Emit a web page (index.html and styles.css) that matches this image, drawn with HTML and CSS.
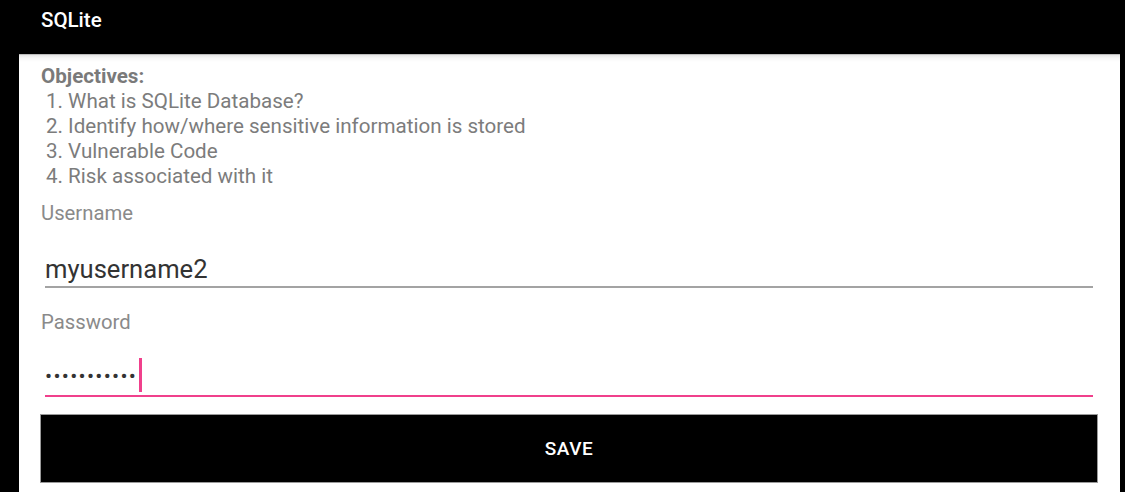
FILE: index.html
```html
<!DOCTYPE html>
<html>
<head>
<meta charset="utf-8">
<link rel="stylesheet" href="styles.css">
</head>
<body>
<div class="app">
  <header class="toolbar"><span class="title">SQLite</span></header>
  <main class="panel">
    <div class="objectives">
      <div class="obj-title">Objectives:</div>
      <div class="obj-item">1. What is SQLite Database?</div>
      <div class="obj-item">2. Identify how/where sensitive information is stored</div>
      <div class="obj-item">3. Vulnerable Code</div>
      <div class="obj-item">4. Risk associated with it</div>
    </div>
    <div class="label label-user">Username</div>
    <div class="field field-user">myusername2</div>
    <div class="label label-pass">Password</div>
    <div class="field field-pass"><span class="dots">•••••••••••</span><span class="cursor"></span></div>
    <button class="save">SAVE</button>
  </main>
</div>
</body>
</html>
```

FILE: styles.css
```css
* { box-sizing: border-box; }
html, body { margin: 0; padding: 0; }
body {
  background: #000;
  font-family: Roboto, "Noto Sans", sans-serif;
  width: 1125px;
  height: 492px;
  overflow: hidden;
}
.app {
  display: flex;
  flex-direction: column;
  height: 492px;
}
.toolbar {
  height: 54px;
  padding: 9px 0 0 41px;
}
.title {
  color: #fff;
  font-size: 20.5px;
  line-height: 22px;
  font-weight: 500;
}
.panel {
  flex: 1;
  margin: 0 5px 0 19px;
  background: linear-gradient(#e6e6e6 0, #f7f7f7 3px, #fff 7px);
  border-top: 1px solid #bdbdbd;
  padding: 9px 22px 0 21px;
  display: flex;
  flex-direction: column;
}
.objectives {
  padding-left: 1px;
  font-size: 20.6px;
  line-height: 25px;
  color: #7c7c7c;
}
.obj-title { font-weight: 700; color: #7a7a7a; }
.obj-item { padding-left: 5px; }
.label {
  padding-left: 1px;
  font-size: 20.3px;
  line-height: 25px;
  color: #8a8a8a;
}
.label-user { margin-top: 12px; }
.label-pass { margin-top: 22px; }
.field {
  margin: 0 5px;
  color: #333;
}
.field-user {
  font-size: 25.6px;
  padding-top: 30px;
  padding-bottom: 4px;
  line-height: 26px;
  border-bottom: 2px solid #a3a3a3;
}
.field-pass {
  display: flex;
  align-items: center;
  gap: 2px;
  height: 62px;
  padding-top: 23px;
  padding-bottom: 3px;
  border-bottom: 2px solid #f0408c;
}
.dots {
  font-size: 21px;
  letter-spacing: 1.3px;
  color: #333;
  position: relative;
  top: 1px;
}
.cursor {
  display: block;
  width: 3px;
  height: 34px;
  background: #f0408c;
}
.save {
  margin-top: 17px;
  height: 69px;
  width: 100%;
  background: #000;
  border: 1px solid #9a9a9a;
  color: #fff;
  font-family: Roboto, "Noto Sans", sans-serif;
  font-size: 19px;
  font-weight: 500;
  letter-spacing: 0.5px;
  cursor: pointer;
}
```
